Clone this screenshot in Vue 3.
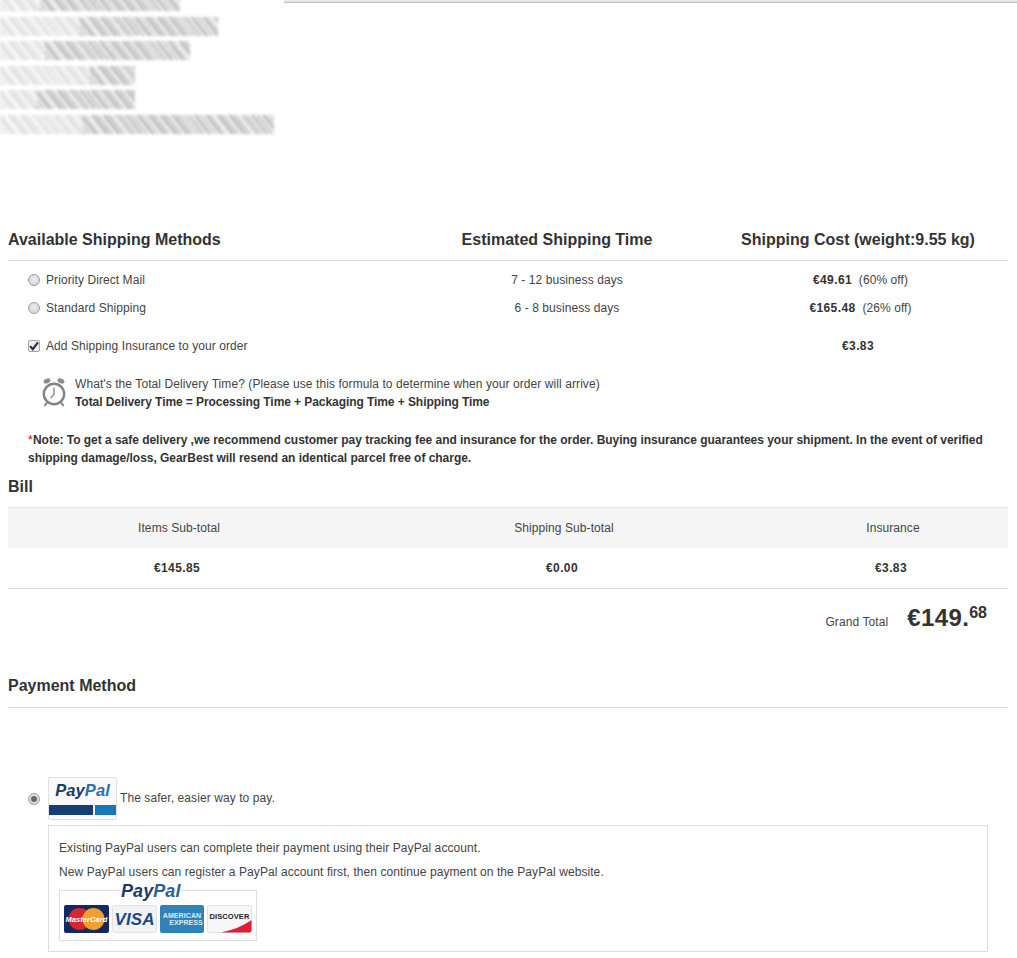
<script setup>
const blurLines = [
  { light: 40, dark: 140 },
  { light: 80, dark: 138 },
  { light: 45, dark: 145 },
  { light: 90, dark: 45 },
  { light: 37, dark: 98 },
  { light: 83, dark: 191 }
]
const shipping = [
  { name: 'Priority Direct Mail', time: '7 - 12 business days', cost: '€49.61', off: '(60% off)' },
  { name: 'Standard Shipping', time: '6 - 8 business days', cost: '€165.48', off: '(26% off)' }
]
</script>

<template>
  <div class="page">
    <div class="top">
      <div class="blurred">
        <div v-for="(l, i) in blurLines" :key="i" class="blur-line">
          <span class="blur-light" :style="{ width: l.light + 'px' }"></span>
          <span class="blur-dark" :style="{ width: l.dark + 'px' }"></span>
        </div>
      </div>
      <div class="top-rule"></div>
    </div>

    <section class="content">
      <div class="ship-head grid-ship">
        <h2>Available Shipping Methods</h2>
        <h2 class="c">Estimated Shipping Time</h2>
        <h2 class="c">Shipping Cost (weight:9.55 kg)</h2>
      </div>

      <div v-for="s in shipping" :key="s.name" class="ship-row grid-ship">
        <label class="opt"><span class="radio"></span>{{ s.name }}</label>
        <div class="c shift">{{ s.time }}</div>
        <div class="c cost"><b class="price">{{ s.cost }}</b>&nbsp; {{ s.off }}</div>
      </div>

      <div class="ship-row insurance grid-ship">
        <label class="opt"><span class="check">
          <svg width="10" height="10" viewBox="0 0 9 9"><path d="M1 4.6 L3.4 7.4 L8 1.2" fill="none" stroke="#333" stroke-width="2"/></svg>
        </span>Add Shipping Insurance to your order</label>
        <div></div>
        <div class="c"><b class="price">€3.83</b></div>
      </div>

      <div class="delivery">
        <svg class="clock" width="26" height="30" viewBox="0 0 26 30">
          <ellipse cx="6" cy="3" rx="3.6" ry="2.4" fill="#8a8f8a" transform="rotate(-20 6 3)"/>
          <ellipse cx="20" cy="3" rx="3.6" ry="2.4" fill="#8a8f8a" transform="rotate(20 20 3)"/>
          <circle cx="13" cy="16" r="10.2" fill="#fff" stroke="#7f8580" stroke-width="2.4"/>
          <path d="M13 9.5 V16.5 L9.5 20" fill="none" stroke="#7f8580" stroke-width="1.3"/>
          <path d="M6 24.5 L3.5 28 M20 24.5 L22.5 28" stroke="#7f8580" stroke-width="2"/>
        </svg>
        <div>
          <p>What's the Total Delivery Time? (Please use this formula to determine when your order will arrive)</p>
          <p><b class="formula">Total Delivery Time = Processing Time + Packaging Time + Shipping Time</b></p>
        </div>
      </div>

      <p class="note"><span class="star">*</span><b>Note: To get a safe delivery ,we recommend customer pay tracking fee and insurance for the order. Buying insurance guarantees your shipment. In the event of verified shipping damage/loss, GearBest will resend an identical parcel free of charge.</b></p>

      <h2 class="bill-title">Bill</h2>
      <div class="bill-head grid-bill">
        <div>Items Sub-total</div>
        <div>Shipping Sub-total</div>
        <div>Insurance</div>
      </div>
      <div class="bill-row grid-bill">
        <div><b class="price left">€145.85</b></div>
        <div><b class="price left">€0.00</b></div>
        <div><b class="price left">€3.83</b></div>
      </div>
      <div class="grand">
        <span class="grand-label">Grand Total</span>
        <span class="grand-val">€149.<sup>68</sup></span>
      </div>

      <h2 class="pay-title">Payment Method</h2>

      <div class="pay-opt">
        <span class="radio checked"></span>
        <div class="pp-tile">
          <span class="pp-word"><i class="p1">Pay</i><i class="p2">Pal</i></span>
          <div class="pp-bars"><span class="bar-a"></span><span class="bar-b"></span></div>
        </div>
        <span class="pp-text">The safer, easier way to pay.</span>
      </div>

      <div class="pay-box">
        <p>Existing PayPal users can complete their payment using their PayPal account.</p>
        <p>New PayPal users can register a PayPal account first, then continue payment on the PayPal website.</p>
        <div class="cards">
          <span class="cards-word"><i class="p1">Pay</i><i class="p3">Pal</i></span>
          <svg class="card" width="45" height="28" viewBox="0 0 45 28">
            <rect width="45" height="28" rx="2" fill="#14295f"/>
            <circle cx="15.5" cy="14" r="11" fill="#d8262c"/>
            <circle cx="29.5" cy="14" r="11" fill="#f0a030"/>
            <text x="22.5" y="16.5" text-anchor="middle" class="mc">MasterCard</text>
          </svg>
          <svg class="card" width="45" height="28" viewBox="0 0 45 28">
            <rect x="0.5" y="0.5" width="44" height="27" rx="2" fill="#f2f3f3" stroke="#e2e2e2"/>
            <text x="22.5" y="20" text-anchor="middle" class="visa">VISA</text>
          </svg>
          <svg class="card" width="44" height="28" viewBox="0 0 44 28">
            <rect width="44" height="28" rx="2" fill="#2f83b8"/>
            <text x="22" y="13" text-anchor="middle" class="amex">AMERICAN</text>
            <text x="26" y="20" text-anchor="middle" class="amex">EXPRESS</text>
          </svg>
          <svg class="card" width="45" height="28" viewBox="0 0 45 28">
            <rect x="0.5" y="0.5" width="44" height="27" rx="2" fill="#f6f6f6" stroke="#e2e2e2"/>
            <path d="M14 27.5 Q32 24 44.5 15 V25.5 Q44.5 27.5 42.5 27.5 Z" fill="#dc1f36"/>
            <text x="22.5" y="14" text-anchor="middle" class="disc">DISCOVER</text>
          </svg>
        </div>
      </div>
    </section>
  </div>
</template>

<style scoped>
.page {
  width: 1017px;
  height: 958px;
  overflow: hidden;
  background: #fff;
  color: #444;
  font: 12px/18px "Liberation Sans", Arial, sans-serif;
  letter-spacing: 0.08px;
}
p { margin: 0; }
h2 {
  margin: 0;
  font-size: 16px;
  line-height: 20px;
  font-weight: bold;
  color: #333;
  letter-spacing: 0;
}
b { color: #333; }
.price { letter-spacing: 0.4px; }
.price.left { margin-right: 4px; display: inline-block; }
.formula { letter-spacing: -0.07px; }
.top {
  position: relative;
  display: flow-root;
  height: 229px;
  overflow: hidden;
}
.top-rule {
  position: absolute;
  left: 284px;
  right: 0;
  top: 0;
  height: 3px;
  background: linear-gradient(#f0f0f0, #e4e4e4 50%, #aaa);
}
.blurred {
  display: flex;
  flex-direction: column;
  gap: 5.5px;
  margin-top: -8px;
  filter: blur(1.7px);
}
.blur-line {
  display: flex;
  height: 19px;
}
.blur-light, .blur-dark {
  display: block;
  height: 100%;
  background:
    repeating-linear-gradient(52deg, transparent 0 3px, #fff 3px 4px, transparent 4px 11px),
    repeating-linear-gradient(52deg, #888 0 2px, #bbb 2px 5px, #999 5px 6px, #ddd 6px 9px);
}
.blur-light { opacity: 0.3; }
.blur-dark { opacity: 0.62; }
.content {
  margin: 0 9px 0 8px;
}
.grid-ship {
  display: grid;
  grid-template-columns: 398px 302px 300px;
  align-items: center;
}
.c { text-align: center; }
.shift { padding-left: 20px; }
.cost { padding-left: 5px; }
.ship-head {
  padding-bottom: 10px;
  height: 21px;
  border-bottom: 1px solid #ddd;
}
.ship-row {
  height: 28px;
}
.ship-row:nth-child(2) { margin-top: 5px; }
.insurance { margin-top: 10px; }
.opt {
  display: flex;
  align-items: center;
  padding-left: 20px;
  gap: 6px;
}
.radio {
  width: 12px;
  height: 12px;
  box-sizing: border-box;
  border-radius: 50%;
  border: 1px solid #a0a0a0;
  background: radial-gradient(circle at 50% 40%, #eee, #cfcfcf);
  flex: none;
  position: relative;
}
.radio.checked::after {
  content: "";
  position: absolute;
  left: 2px;
  top: 2px;
  width: 6px;
  height: 6px;
  border-radius: 50%;
  background: #666;
}
.check {
  width: 12px;
  height: 12px;
  box-sizing: border-box;
  border: 1px solid #a5a5a5;
  border-radius: 2px;
  background: #eee;
  display: flex;
  align-items: center;
  justify-content: center;
  flex: none;
}
.delivery {
  display: flex;
  align-items: center;
  gap: 8px;
  margin: 15px 0 0 33px;
}
.note {
  margin: 20px 0 0 20px;
  width: 970px;
}
.note b { letter-spacing: -0.03px; }
.star { color: #c00; letter-spacing: 0.3px; }
.bill-title { margin-top: 10px; line-height: 20px; }
.grid-bill {
  display: grid;
  grid-template-columns: 342px 428px 230px;
  align-items: center;
  text-align: center;
}
.bill-head {
  margin-top: 10px;
  height: 40px;
  background: #f5f5f5;
  border-top: 1px solid #e4e4e4;
}
.bill-row {
  height: 40px;
  border-bottom: 1px solid #ddd;
}
.grand {
  display: flex;
  justify-content: flex-end;
  align-items: baseline;
  padding-right: 21px;
  gap: 19px;
  margin-top: 13px;
}
.grand-val {
  font-size: 24px;
  line-height: 32px;
  font-weight: bold;
  color: #333;
  letter-spacing: 0.4px;
}
.grand-val sup {
  font-size: 16px;
  line-height: 0;
  vertical-align: 8px;
  letter-spacing: 0;
}
.pay-title {
  margin-top: 42px;
  padding-bottom: 11px;
  border-bottom: 1px solid #ddd;
}
.pay-opt {
  display: flex;
  align-items: center;
  margin: 69px 0 0 20px;
}
.pay-opt .radio { margin-right: 8px; }
.pp-tile {
  width: 69px;
  height: 43px;
  box-sizing: border-box;
  border: 1px solid #e0e0e0;
  border-radius: 2px;
  background: #fafafa;
  display: flex;
  flex-direction: column;
  align-items: center;
  overflow: hidden;
}
.pp-word {
  font: italic bold 16.5px/25px "Liberation Sans", Arial, sans-serif;
  margin-bottom: 2px;
  flex: none;
}
.pp-word i, .cards-word i { font-style: italic; }
.p1 { color: #1b3a6b; }
.p2 { color: #2b6fb0; }
.p3 { color: #2b5f96; }
.pp-bars {
  display: flex;
  gap: 2px;
  width: 100%;
  height: 10px;
  flex: none;
}
.bar-a { flex: 1; background: #123f75; }
.bar-b { width: 21px; background: #1a78b8; }
.pp-text { margin: -2px 0 0 3px; }
.pay-box {
  margin: 5px 20px 0 40px;
  height: 127px;
  box-sizing: border-box;
  border: 1px solid #ddd;
  padding: 13px 10px 0;
}
.pay-box p { margin-bottom: 6px; }
.cards {
  position: relative;
  width: 198px;
  height: 51px;
  box-sizing: border-box;
  border: 1px solid #ddd;
  display: flex;
  gap: 3px;
  padding: 14px 4px 0;
  margin-top: 9px;
}
.cards-word {
  position: absolute;
  left: 61px;
  top: -10px;
  font: italic bold 18px/20px "Liberation Sans", Arial, sans-serif;
  background: #fff;
}
.card { flex: none; }
.mc {
  font: italic bold 7.5px "Liberation Sans", Arial, sans-serif;
  fill: #fff;
}
.visa {
  font: italic bold 17px "Liberation Sans", Arial, sans-serif;
  fill: #1c4a86;
}
.amex {
  font: bold 7px "Liberation Sans", Arial, sans-serif;
  fill: #dceaf4;
}
.disc {
  font: bold 7.5px "Liberation Sans", Arial, sans-serif;
  fill: #222;
}
</style>
